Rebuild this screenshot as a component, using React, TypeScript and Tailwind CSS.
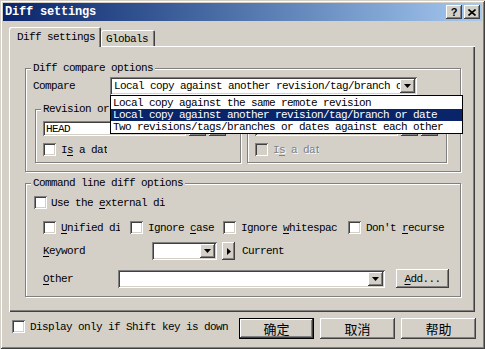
import React from 'react';

const sunken =
  'shadow-[inset_1px_1px_0_#808080,inset_-1px_-1px_0_#fff,inset_2px_2px_0_#404040,inset_-2px_-2px_0_#d4d0c8]';
const raised =
  'shadow-[inset_-1px_-1px_0_#404040,inset_1px_1px_0_#fff,inset_-2px_-2px_0_#808080,inset_2px_2px_0_#d4d0c8]';
const etched = 'border border-[#808080] shadow-[inset_1px_1px_0_#fff,1px_1px_0_#fff]';
const mono = "font-['Liberation_Mono',monospace] text-[11px] tracking-[-0.6px] leading-[12px]";
const disabledText = 'text-[#808080] [text-shadow:1px_1px_0_#fff]';

const DownArrow = () => (
  <svg width="7" height="4" viewBox="0 0 7 4">
    <path d="M0 0h7L3.5 4z" fill="#000" />
  </svg>
);

const Check = ({ disabled = false }: { disabled?: boolean }) => (
  <span className={`block w-[13px] h-[13px] shrink-0 ${sunken} ${disabled ? 'bg-[#d4d0c8]' : 'bg-white'}`} />
);

const U = ({ children }: { children: React.ReactNode }) => <span className="underline underline-offset-2">{children}</span>;

const Combo = ({ width, text = '', children }: { width: string; text?: string; children?: React.ReactNode }) => (
  <div className={`relative h-[18px] bg-white ${sunken} flex items-center ${width}`}>
    <span className="flex-1 overflow-hidden whitespace-nowrap pl-[4px]">{text}</span>
    <span className={`w-[15px] h-[14px] mr-[2px] bg-[#d4d0c8] ${raised} flex items-center justify-center`}>
      <DownArrow />
    </span>
    {children}
  </div>
);

const Group = ({ label, className, children }: { label: React.ReactNode; className: string; children?: React.ReactNode }) => (
  <div className={`relative ${etched} ${className}`}>
    <span className="absolute -top-[7px] left-[5px] px-[2px] bg-[#d4d0c8] whitespace-nowrap">{label}</span>
    {children}
  </div>
);

const RevisionGroup = ({ disabled = false, className }: { disabled?: boolean; className: string }) => (
  <Group label="Revision or date" className={className}>
    <div className="flex items-center pl-[7px] pt-[11px] gap-[3px]">
      <div className={`w-[143px] h-[15px] ${sunken} ${disabled ? 'bg-[#d4d0c8]' : 'bg-white'} pl-[3px] flex items-center`}>
        {disabled ? '' : 'HEAD'}
      </div>
      <span className={`w-[17px] h-[15px] ${raised} bg-[#d4d0c8]`} />
      <span className={`w-[17px] h-[15px] ${raised} bg-[#d4d0c8]`} />
    </div>
    <div className="flex items-center pl-[7px] mt-[7px] gap-[5px]">
      <Check disabled={disabled} />
      <span className={`w-[46px] overflow-hidden whitespace-nowrap ${disabled ? disabledText : ''}`}>
        I<U>s</U> a date
      </span>
    </div>
  </Group>
);

const Option = ({ w, textW, children }: { w: string; textW: string; children: React.ReactNode }) => (
  <div className={`flex items-center gap-[5px] ${w}`}>
    <Check />
    <span className={`overflow-hidden whitespace-nowrap ${textW}`}>{children}</span>
  </div>
);

export default function App() {
  return (
    <div
      className={`w-[485px] h-[349px] bg-[#d4d0c8] p-[3px] text-black ${mono} shadow-[inset_1px_1px_0_#d4d0c8,inset_-1px_-1px_0_#404040,inset_2px_2px_0_#fff,inset_-2px_-2px_0_#808080] flex flex-col`}
    >
      {/* title bar */}
      <div className="h-[18px] bg-linear-to-r from-[#0a246a] to-[#a6caf0] flex items-center pl-[2px] pr-[2px]">
        <span className="text-white font-bold text-[12px] tracking-[-0.2px]">Diff settings</span>
        <div className="ml-auto flex gap-[2px]">
          <span className={`w-[16px] h-[14px] bg-[#d4d0c8] ${raised} flex items-center justify-center font-bold text-[11px] font-['Liberation_Sans',sans-serif] tracking-normal`}>
            ?
          </span>
          <span className={`w-[16px] h-[14px] bg-[#d4d0c8] ${raised} flex items-center justify-center`}>
            <svg width="8" height="7" viewBox="0 0 8 7">
              <path d="M0.5 0.5l7 6M7.5 0.5l-7 6" stroke="#000" strokeWidth="1.6" />
            </svg>
          </span>
        </div>
      </div>

      {/* tabs */}
      <div className="flex items-end h-[19px] mt-[6px] ml-[6px]">
        <div className="relative z-10 h-[20px] -mb-px w-[92px] bg-[#d4d0c8] rounded-t-[2px] shadow-[inset_1px_1px_0_#fff,inset_-1px_0_0_#404040,inset_-2px_0_0_#808080] pl-[8px] pt-[4px]">
          Diff settings
        </div>
        <div className="h-[16px] w-[54px] bg-[#d4d0c8] rounded-t-[2px] shadow-[inset_1px_1px_0_#fff,inset_-1px_0_0_#404040,inset_-2px_0_0_#808080] pl-[5px] pt-[3px]">
          Globals
        </div>
      </div>

      {/* tab panel */}
      <div className="ml-[6px] w-[466px] h-[266px] shadow-[inset_1px_1px_0_#fff,inset_-1px_-1px_0_#404040,inset_-2px_-2px_0_#808080] pt-[22px] pl-[16px]">
        <Group label="Diff compare options" className="w-[436px] h-[104px]">
          <div className="flex items-center pl-[7px] mt-[8px]">
            <span className="w-[77px]">Compare</span>
            <Combo width="w-[307px]" text="Local copy against another revision/tag/branch or date">
              <div className="absolute left-0 top-full z-20 w-[353px] bg-white border border-black pt-px">
                <div className="h-[12px] pl-[2px] whitespace-nowrap">Local copy against the same remote revision</div>
                <div className="h-[12px] pl-[2px] whitespace-nowrap bg-[#0a246a] text-white">
                  Local copy against another revision/tag/branch or date
                </div>
                <div className="h-[12px] pl-[2px] whitespace-nowrap">Two revisions/tags/branches or dates against each other</div>
              </div>
            </Combo>
          </div>
          <div className="flex pl-[9px] mt-[14px] gap-[6px]">
            <RevisionGroup className="w-[206px] h-[54px]" />
            <RevisionGroup disabled className="w-[200px] h-[54px]" />
          </div>
        </Group>

        <Group label="Command line diff options" className="w-[436px] h-[114px] mt-[11px]">
          <div className="flex items-center gap-[4px] pl-[8px] mt-[12px]">
            <Check />
            <span className="w-[114px] overflow-hidden whitespace-nowrap">
              Use the <U>e</U>xternal diff
            </span>
          </div>
          <div className="flex items-center pl-[17px] mt-[12px]">
            <Option w="w-[87px]" textW="w-[59px]">
              <U>U</U>nified diff
            </Option>
            <Option w="w-[93px]" textW="w-[72px]">
              Ignore <U>c</U>ase
            </Option>
            <Option w="w-[125px]" textW="w-[96px]">
              Ignore <U>w</U>hitespace
            </Option>
            <Option w="w-[100px]" textW="w-[80px]">
              Don't <U>r</U>ecurse
            </Option>
          </div>
          <div className="flex items-center pl-[17px] mt-[8px]">
            <span className="w-[109px]">
              <U>K</U>eyword
            </span>
            <Combo width="w-[65px]" />
            <span className={`ml-[5px] w-[13px] h-[18px] bg-[#d4d0c8] ${raised} flex items-center justify-center`}>
              <svg width="4" height="7" viewBox="0 0 4 7">
                <path d="M0 0v7l4-3.5z" fill="#000" />
              </svg>
            </span>
            <span className="ml-[7px]">Current</span>
          </div>
          <div className="flex items-center pl-[17px] mt-[9px]">
            <span className="w-[75px]">
              <U>O</U>ther
            </span>
            <Combo width="w-[267px]" />
            <span className={`ml-[11px] w-[53px] h-[19px] bg-[#d4d0c8] ${raised} flex items-center justify-center`}>
              <U>A</U>dd...
            </span>
          </div>
        </Group>
      </div>

      {/* bottom row */}
      <div className="flex items-start mt-[6px] pl-[9px] pr-[6px]">
        <div className="flex items-center gap-[5px] mt-[2px]">
          <Check />
          <span>Display only if Shift key is down</span>
        </div>
        <div className="ml-auto flex gap-[6px] font-['Noto_Sans_CJK_SC',sans-serif] text-[13px] tracking-normal">
          <span className="w-[75px] h-[21px] border border-black bg-[#d4d0c8] shadow-[inset_-1px_-1px_0_#404040,inset_1px_1px_0_#fff,inset_-2px_-2px_0_#808080] flex items-center justify-center">
            确定
          </span>
          <span className={`w-[75px] h-[21px] bg-[#d4d0c8] ${raised} flex items-center justify-center`}>取消</span>
          <span className={`w-[75px] h-[21px] bg-[#d4d0c8] ${raised} flex items-center justify-center`}>帮助</span>
        </div>
      </div>
    </div>
  );
}
